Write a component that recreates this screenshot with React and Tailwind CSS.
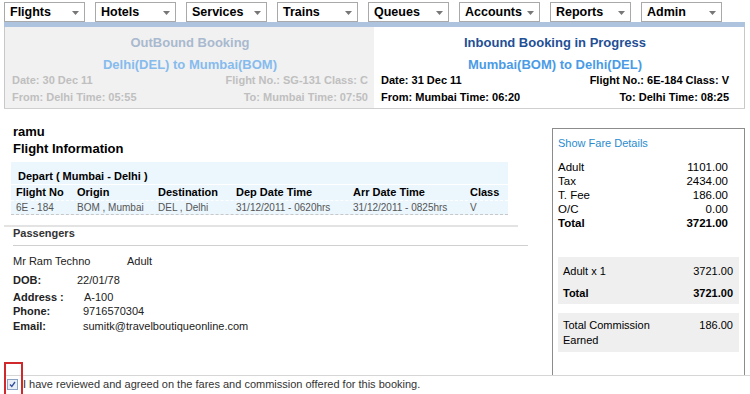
import React from "react";

const menus = ["Flights", "Hotels", "Services", "Trains", "Queues", "Accounts", "Reports", "Admin"];

const NavBox = ({ label }) => (
  <div className="flex items-center justify-between w-[81px] h-[20px] bg-white border border-[#a9a9a9] pl-[5px] pr-[5px]">
    <span className="text-[12.5px] font-bold text-black leading-none">{label}</span>
    <svg width="7" height="4" viewBox="0 0 7 4" className="mt-[2px]">
      <path d="M0 0h7L3.5 4z" fill="#777" />
    </svg>
  </div>
);

const FareRow = ({ label, value, bold }) => (
  <div className={`flex justify-between h-[14px] leading-[14px] text-[11.5px] ${bold ? "font-bold" : ""}`}>
    <span>{label}</span>
    <span>{value}</span>
  </div>
);

const cols = "grid grid-cols-[61px_81px_78px_117px_117px_1fr]";

export default function App() {
  return (
    <div className="w-[750px] h-[394px] bg-white text-black overflow-hidden relative" style={{ fontFamily: '"Liberation Sans", Arial, sans-serif' }}>
      {/* Top menu */}
      <div className="flex gap-[10px] pl-[4px] pt-[2px]">
        {menus.map((m) => (
          <NavBox key={m} label={m} />
        ))}
      </div>

      {/* Booking summary */}
      <div className="ml-[4px] mr-[5px] h-[5px] bg-[#aec3de]" />
      <div className="flex ml-[4px] mr-[5px] h-[82px] border-b border-[#cfcfcf]">
        <div className="w-[370px] bg-[#f1f1f1] border-l border-[#c8c8c8] pl-[7px] pr-[6px] font-bold">
          <div className="text-center text-[13px] text-[#a9b9cf] mt-[8px] leading-[16px]">OutBound Booking</div>
          <div className="text-center text-[13px] text-[#86bbee] mt-[6px] leading-[16px]">Delhi(DEL) to Mumbai(BOM)</div>
          <div className="flex justify-between text-[11px] text-[#bfbfbf] leading-[14px]">
            <span>Date: 30 Dec 11</span>
            <span>Flight No.: SG-131 Class: C</span>
          </div>
          <div className="flex justify-between text-[11px] text-[#bfbfbf] leading-[14px] mt-[3px]">
            <span>From: Delhi Time: 05:55</span>
            <span>To: Mumbai Time: 07:50</span>
          </div>
        </div>
        <div className="flex-1 bg-white border-r border-[#c8c8c8] pl-[7px] pr-[15px] font-bold">
          <div className="text-center text-[13px] text-[#1f4f96] mt-[8px] leading-[16px]">Inbound Booking in Progress</div>
          <div className="text-center text-[13px] text-[#4a9be6] mt-[6px] leading-[16px]">Mumbai(BOM) to Delhi(DEL)</div>
          <div className="flex justify-between text-[11px] leading-[14px]">
            <span>Date: 31 Dec 11</span>
            <span>Flight No.: 6E-184 Class: V</span>
          </div>
          <div className="flex justify-between text-[11px] leading-[14px] mt-[3px]">
            <span>From: Mumbai Time: 06:20</span>
            <span>To: Delhi Time: 08:25</span>
          </div>
        </div>
      </div>

      {/* Main content */}
      <div className="flex h-[266px]">
        <div className="w-[530px] pt-[15px]">
          <div className="pl-[13px] font-bold text-[13px] leading-[15px]">ramu</div>
          <div className="pl-[13px] font-bold text-[13px] leading-[16px] mt-[2px]">Flight Information</div>

          <div className="ml-[11px] w-[497px] mt-[5px] bg-[#ebf6fd]">
            <div className="h-[22px] pt-[7px] leading-[14px] pl-[7px] text-[11px] font-bold">Depart ( Mumbai - Delhi )</div>
            <div className={`${cols} font-bold text-[11px] h-[16px] leading-[15px] pl-[5px] border-t border-white`}>
              <span>Flight No</span>
              <span>Origin</span>
              <span>Destination</span>
              <span>Dep Date Time</span>
              <span>Arr Date Time</span>
              <span>Class</span>
            </div>
            <div className={`${cols} text-[10px] text-[#555] h-[15px] leading-[13px] pl-[5px] border-t border-white border-b border-dashed border-b-[#c8c8c8]`}>
              <span>6E - 184</span>
              <span>BOM , Mumbai</span>
              <span>DEL , Delhi</span>
              <span>31/12/2011 - 0620hrs</span>
              <span>31/12/2011 - 0825hrs</span>
              <span>V</span>
            </div>
          </div>

          <div className="ml-[4px] mr-[12px] mt-[10px] border-t-2 border-[#e3e3e3]" />
          <div className="pl-[13px] font-bold text-[11px] leading-[12px] text-[#333]">Passengers</div>
          <div className="ml-[13px] mr-[2px] mt-[6px] border-t border-[#d0d0d0]" />

          <div className="pl-[13px] text-[11px] text-[#222] mt-[8px]">
            <div className="flex leading-[14px]">
              <span className="w-[114px]">Mr Ram Techno</span>
              <span>Adult</span>
            </div>
            <div className="flex leading-[14px] mt-[5px]">
              <span className="w-[64px] font-bold">DOB:</span>
              <span>22/01/78</span>
            </div>
            <div className="flex leading-[13px] mt-[4px]">
              <span className="w-[71px] font-bold">Address :</span>
              <span>A-100</span>
            </div>
            <div className="flex leading-[13px] mt-[1px]">
              <span className="w-[70px] font-bold">Phone:</span>
              <span>9716570304</span>
            </div>
            <div className="flex leading-[14px] mt-[1px]">
              <span className="w-[70px] font-bold">Email:</span>
              <span>sumitk@travelboutiqueonline.com</span>
            </div>
          </div>
        </div>

        {/* Fare box */}
        <div className="ml-[22px] w-[193px] mt-[19px] h-[247px] border border-[#8c8c8c] border-b-0 px-[5px] pt-[7px]">
          <div className="text-[11px] text-[#2a8ccf] leading-[14px]">Show Fare Details</div>
          <div className="mt-[10px] pr-[11px]">
            <FareRow label="Adult" value="1101.00" />
            <FareRow label="Tax" value="2434.00" />
            <FareRow label="T. Fee" value="186.00" />
            <FareRow label="O/C" value="0.00" />
            <FareRow label="Total" value="3721.00" bold />
          </div>
          <div className="mt-[27px] bg-[#efefef] pl-[5px] pr-[6px] pt-[7px] pb-[4px] text-[11px]">
            <div className="flex justify-between leading-[14px]">
              <span>Adult x 1</span>
              <span>3721.00</span>
            </div>
            <div className="flex justify-between leading-[14px] font-bold mt-[8px]">
              <span>Total</span>
              <span>3721.00</span>
            </div>
          </div>
          <div className="mt-[9px] bg-[#efefef] pl-[5px] pr-[6px] pt-[5px] pb-[4px] text-[11px] flex justify-between">
            <span className="leading-[15px]">Total Commission<br />Earned</span>
            <span className="leading-[15px]">186.00</span>
          </div>
        </div>
      </div>

      {/* Agreement */}
      <div className="border-t border-[#d6d6d6] ml-[4px] flex items-center h-[18px] text-[11px] text-[#333]">
        <div className="w-[11px] h-[11px] ml-[3px] border border-[#8da3c4] bg-[#e9eef6] flex items-center justify-center">
          <svg width="7" height="7" viewBox="0 0 7 7">
            <path d="M1 3.5l1.8 2L6 1" stroke="#2f4c9c" strokeWidth="1.3" fill="none" />
          </svg>
        </div>
        <span className="ml-[5px]">I have reviewed and agreed on the fares and commission offered for this booking.</span>
      </div>
      <div className="absolute left-[4px] top-[362px] w-[19px] h-[34px] border-2 border-[#d0282b]" />
    </div>
  );
}
